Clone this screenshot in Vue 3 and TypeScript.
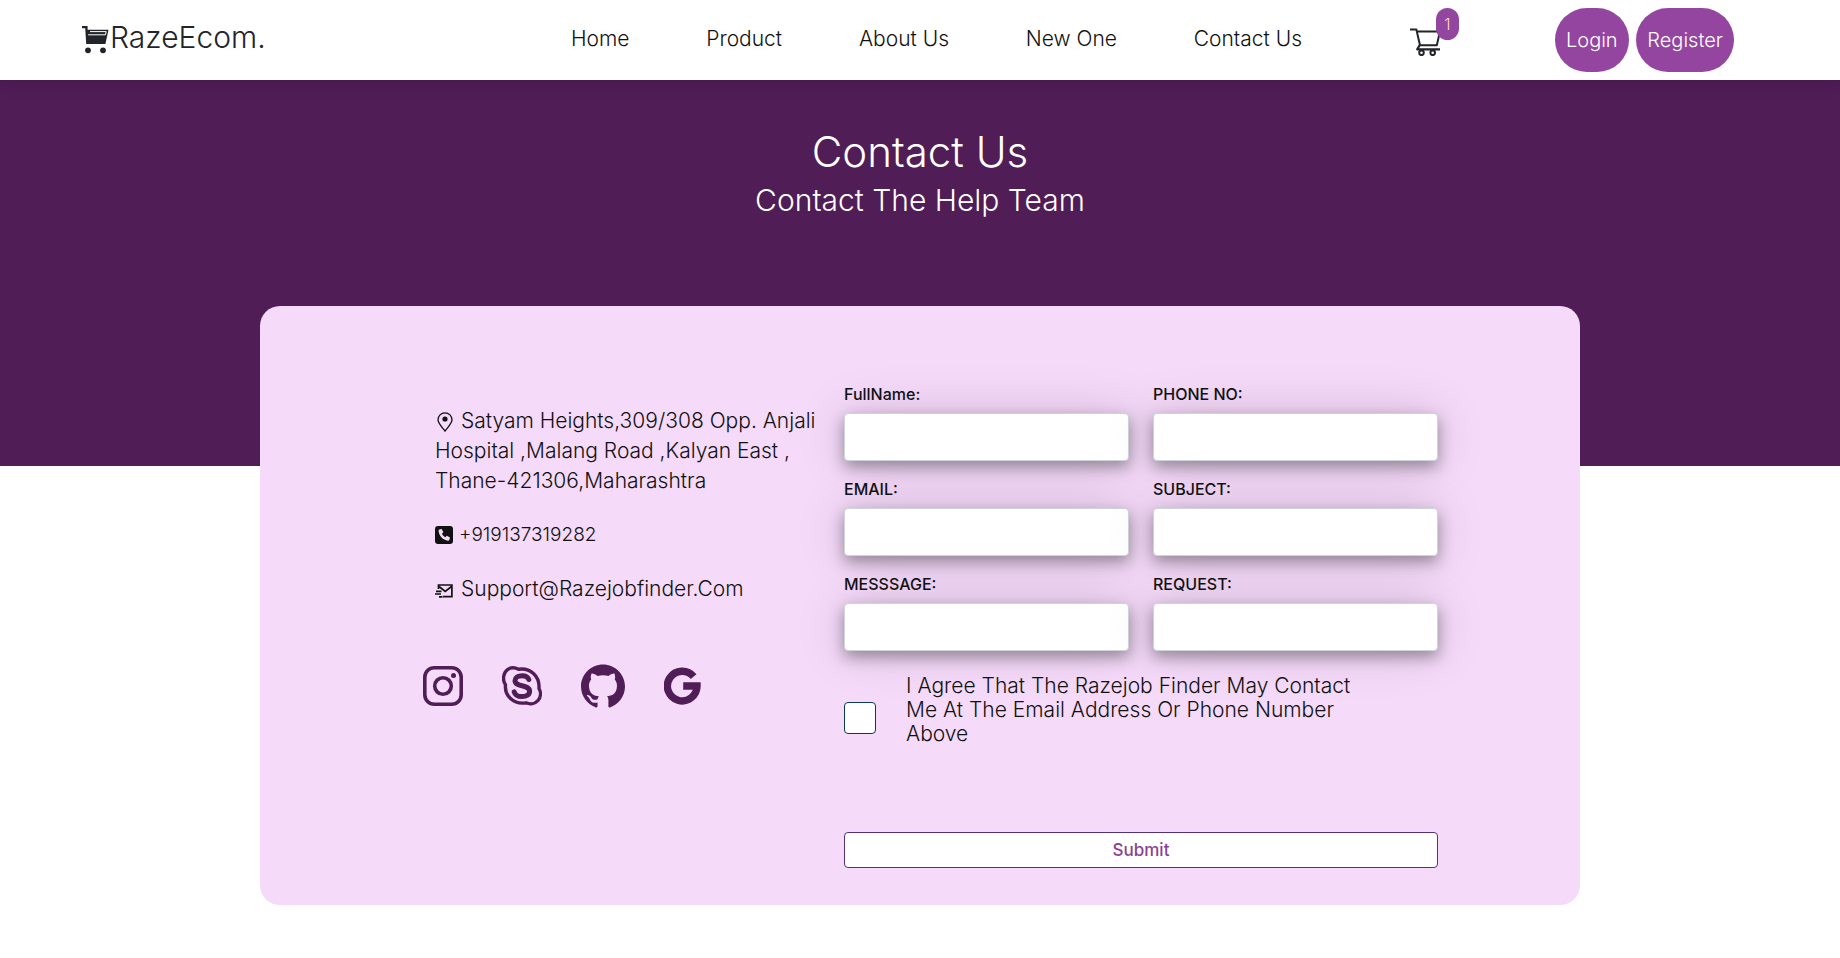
<script setup lang="ts">
import { ref } from 'vue'

interface Field {
  id: string
  label: string
  type: string
}

const links: string[] = ['Home', 'Product', 'About Us', 'New One', 'Contact Us']

const fields: Field[] = [
  { id: 'fullname', label: 'FullName:', type: 'text' },
  { id: 'phone', label: 'PHONE NO:', type: 'tel' },
  { id: 'email', label: 'EMAIL:', type: 'email' },
  { id: 'subject', label: 'SUBJECT:', type: 'text' },
  { id: 'message', label: 'MESSSAGE:', type: 'text' },
  { id: 'request', label: 'REQUEST:', type: 'text' },
]

const values = ref<Record<string, string>>({})
const agreed = ref(false)
const cartCount = ref(1)
</script>

<template>
  <div class="page">
    <header class="nav">
      <a class="brand" href="#">
        <svg class="brand-icon" viewBox="0 0 28 28" aria-hidden="true">
          <path d="M0 0h5.6v3.7H26.5L23.4 18H4.2L3.2 2.3H0z" fill="#212529" />
          <path d="M8 5.6h16.2l-.7 3.2H6.2" fill="none" stroke="#fff" stroke-width="1" />
          <circle cx="6" cy="24.3" r="2.9" fill="#212529" />
          <circle cx="21" cy="24.3" r="2.9" fill="#212529" />
        </svg>
        <span>RazeEcom.</span>
      </a>
      <nav class="links" aria-label="Main">
        <a v-for="link in links" :key="link" href="#">{{ link }}</a>
      </nav>
      <a class="cart" href="#" aria-label="Cart">
        <svg viewBox="0 0 32 28" aria-hidden="true">
          <g fill="none" stroke="#212529" stroke-width="2" stroke-linejoin="round">
            <path d="M0 1.6h6.4L10 17.3h16.8L30 3.4H7" />
            <path d="M9.6 17.3 7.2 21.4H30" stroke-width="2.2" />
            <circle cx="11.5" cy="24.8" r="2.3" />
            <circle cx="22.7" cy="24.8" r="2.3" />
          </g>
        </svg>
        <span class="badge">{{ cartCount }}</span>
      </a>
      <div class="account">
        <button type="button">Login</button>
        <button type="button">Register</button>
      </div>
    </header>

    <section class="hero">
      <h1>Contact Us</h1>
      <p>Contact The Help Team</p>
    </section>

    <main class="card">
      <section class="info">
        <address>
          <p>
            <svg class="pin" viewBox="0 0 16 20" aria-hidden="true">
              <path d="M8 19C5.400 15.500 1 11.500 1 7.800a7 7 0 0 1 14 0C15 11.500 10.600 15.500 8 19z" fill="none" stroke="#111" stroke-width="1.300" />
              <circle cx="8" cy="7" r="2.600" fill="#111" />
            </svg>
            Satyam Heights,309/308 Opp. Anjali Hospital ,Malang Road ,Kalyan East , Thane-421306,Maharashtra
          </p>
          <p class="phone">
            <svg viewBox="0 0 18 18" aria-hidden="true">
              <rect width="18" height="18" rx="3" fill="#111" />
              <path d="M4.400 3.600 6.700 3l1.700 3.300-1.500 1.500c.7 1.500 1.900 2.700 3.400 3.400l1.500-1.500 3.200 1.700-.6 2.400c-.2.700-.8 1-1.500.9C8 14 4 10 3.600 5c0-.6.200-1.200.8-1.400z" fill="#f5daf9" />
            </svg>
            <a href="tel:+919137319282">+919137319282</a>
          </p>
          <p class="mail">
            <svg viewBox="0 0 18 14" aria-hidden="true">
              <g fill="none" stroke="#111" stroke-width="1.700">
                <path d="M3.500 5V1h13.400v11.700H8" />
                <path d="M4 2.500 10.200 7.400 16.500 2.500" />
                <path d="M1 7.300h5.500M0 10h6M4 12.900h3.500" />
              </g>
            </svg>
            <a href="mailto:support@razejobfinder.com">Support@Razejobfinder.Com</a>
          </p>
        </address>
        <div class="social">
          <a href="#" aria-label="Instagram">
            <svg viewBox="0 0 40 40">
              <g fill="none" stroke="#501d57" stroke-width="3.600">
                <rect x="1.800" y="1.800" width="36.400" height="36.400" rx="9.500" />
                <circle cx="20" cy="20" r="8.300" />
              </g>
              <circle cx="30.500" cy="9.500" r="2.500" fill="#501d57" />
            </svg>
          </a>
          <a href="#" aria-label="Skype">
            <svg viewBox="0 0 40 40">
              <g fill="none" stroke="#501d57" stroke-linecap="round" stroke-linejoin="round">
                <path d="M2.800 17.500C.4 13 1.500 6.500 5.500 3.600 9 1.200 13 1.500 16.500 3.200 28 1.400 38 10 37 22.500c2 3.500 2 8.500-1 12-3 3.400-8 4-12 2.300C12 39 2.300 30 3.500 18.800z" stroke-width="3.400" />
                <path d="M26.800 13.500C26 10.900 23.500 9.700 20 9.700c-4.200 0-7 1.900-7 4.800 0 3.500 3.200 4.300 7 5.200s7.600 1.900 7.600 5.500-3.200 5.300-7.600 5.300c-4.200 0-7-1.700-7.800-4.700" stroke-width="5" />
              </g>
            </svg>
          </a>
          <a class="big" href="#" aria-label="GitHub">
            <svg viewBox="0 0 24 24">
              <path fill="#501d57" d="M12 .297c-6.630 0-12 5.373-12 12 0 5.303 3.438 9.800 8.205 11.385.6.113.820-.258.820-.577 0-.285-.010-1.040-.015-2.040-3.338.724-4.042-1.610-4.042-1.610C4.422 18.070 3.633 17.700 3.633 17.700c-1.087-.744.084-.729.084-.729 1.205.084 1.838 1.236 1.838 1.236 1.070 1.835 2.809 1.305 3.495.998.108-.776.417-1.305.760-1.605-2.665-.300-5.466-1.332-5.466-5.930 0-1.310.465-2.380 1.235-3.220-.135-.303-.540-1.523.105-3.176 0 0 1.005-.322 3.300 1.230.960-.267 1.980-.399 3-.405 1.020.006 2.040.138 3 .405 2.280-1.552 3.285-1.230 3.285-1.230.645 1.653.240 2.873.120 3.176.765.840 1.230 1.910 1.230 3.220 0 4.610-2.805 5.625-5.475 5.920.420.360.810 1.096.810 2.220 0 1.606-.015 2.896-.015 3.286 0 .315.210.690.825.570C20.565 22.092 24 17.592 24 12.297c0-6.627-5.373-12-12-12" />
            </svg>
          </a>
          <a href="#" aria-label="Google">
            <svg viewBox="0 0 40 40">
              <path d="M29.600 10.600A14.800 14.800 0 1 0 33 20H19.200" fill="none" stroke="#501d57" stroke-width="7.400" />
            </svg>
          </a>
        </div>
      </section>

      <form class="form" @submit.prevent>
        <div v-for="field in fields" :key="field.id" class="field">
          <label :for="field.id">{{ field.label }}</label>
          <input :id="field.id" v-model="values[field.id]" :type="field.type" />
        </div>
        <div class="agree">
          <input id="agree" v-model="agreed" type="checkbox" />
          <label for="agree">I Agree That The Razejob Finder May Contact Me At The Email Address Or Phone Number Above</label>
        </div>
        <button class="submit" type="submit">Submit</button>
      </form>
    </main>
  </div>
</template>

<style>
body {
  margin: 0;
  background: #fff;
}
</style>

<style scoped>
.page {
  font-family: Inter, "Liberation Sans", sans-serif;
  font-weight: 300;
  color: #111;
}

.page * {
  box-sizing: border-box;
}

a {
  color: inherit;
  text-decoration: none;
}

button,
input {
  font: inherit;
}

.nav {
  position: relative;
  display: grid;
  grid-template-columns: 489fr 839fr 145fr 179fr;
  align-items: center;
  min-height: 80px;
  padding: 0 106px 0 82px;
  background: #fff;
  box-shadow: 0 2px 16px rgba(0, 0, 0, 0.15);
}

.brand {
  display: flex;
  align-items: center;
  font-size: 30px;
  line-height: 36px;
  color: #212529;
  padding-bottom: 6px;
}

.brand-icon {
  width: 28px;
  height: 28px;
  margin-top: 6px;
}

.links {
  display: flex;
  justify-content: space-between;
  padding: 0 108px 2px 0;
  font-size: 21px;
  line-height: 30px;
}

.cart {
  position: relative;
  width: 49px;
  height: 64px;
  padding-top: 20px;
}

.cart svg {
  display: block;
  width: 32px;
  height: 28px;
}

.badge {
  position: absolute;
  top: 0;
  right: 0;
  width: 23px;
  border-radius: 12px;
  background: #9445a0;
  color: #ffdab9;
  font-size: 16px;
  line-height: 32px;
  text-align: center;
}

.account {
  display: flex;
  justify-content: space-between;
}

.account button {
  height: 64px;
  padding: 0 11px;
  border: 0;
  border-radius: 32px;
  background: #9445a0;
  color: #fff;
  font-size: 20px;
}

.hero {
  min-height: 386px;
  padding: 48px 16px 0;
  background: #501d57;
  color: #fff;
  text-align: center;
}

.hero h1 {
  margin: 0 0 6px;
  font-size: 42px;
  font-weight: 300;
  line-height: 48px;
}

.hero p {
  margin: 0;
  font-size: 30px;
  line-height: 36px;
}

.card {
  position: relative;
  display: grid;
  grid-template-columns: 409fr 594fr;
  width: calc(100% - 32px);
  max-width: 1320px;
  margin: -160px auto 54px;
  padding: 76px 142px 37px 175px;
  border-radius: 20px;
  background: #f5daf9;
}

.info {
  padding-top: 24px;
}

address {
  max-width: 390px;
  font-style: normal;
  font-size: 21px;
  line-height: 30px;
}

address p {
  margin: 0 0 24px;
}

.pin {
  width: 20px;
  height: 20px;
  vertical-align: -4px;
}

.phone {
  font-size: 19px;
}

.phone svg {
  width: 18px;
  height: 18px;
  margin-right: 6px;
  vertical-align: -3px;
}

.mail svg {
  width: 18px;
  height: 14px;
  margin-right: 8px;
  vertical-align: -2px;
}

.social {
  display: flex;
  align-items: center;
  gap: 39px;
  margin: 60px 0 0 -12px;
}

.social a,
.social svg {
  display: block;
  width: 40px;
  height: 40px;
}

.social .big,
.social .big svg {
  width: 44px;
  height: 44px;
}

.form {
  display: grid;
  grid-template-columns: 1fr 1fr;
  column-gap: 24px;
}

.field label {
  display: block;
  font-size: 16px;
  font-weight: 500;
  line-height: 24px;
}

.field input {
  display: block;
  width: 100%;
  height: 48px;
  margin: 7px 0 16px;
  padding: 6px 12px;
  border: 1px solid #ced4da;
  border-radius: 4px;
  background: #fff;
  box-shadow: 0 6px 15px rgba(0, 0, 0, 0.35), 0 0 50px rgba(0, 0, 0, 0.15);
}

.agree {
  grid-column: 1 / -1;
  display: flex;
  align-items: center;
  gap: 30px;
  margin: 7px 0 86px;
}

.agree input {
  appearance: none;
  flex: none;
  width: 32px;
  height: 32px;
  margin: 16px 0 0;
  border: 1px solid #0c3c55;
  border-radius: 4px;
  background: #fff;
}

.agree input:checked {
  background: #9445a0;
}

.agree label {
  position: relative;
  max-width: 460px;
  font-size: 21px;
  line-height: 24px;
}

.submit {
  grid-column: 1 / -1;
  height: 36px;
  border: 1px solid #54317f;
  border-radius: 4px;
  background: #fff;
  color: #8b3f97;
  font-size: 17px;
  font-weight: 500;
}
</style>
